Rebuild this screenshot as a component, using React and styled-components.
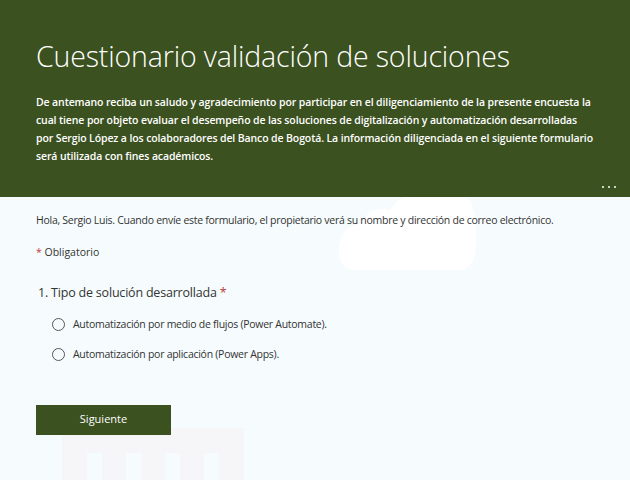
import React from "react";
import styled, { createGlobalStyle } from "styled-components";

const GlobalStyle = createGlobalStyle`
  html, body {
    margin: 0;
    padding: 0;
    background: #f6fcfd;
    font-family: "Open Sans", "Noto Sans", sans-serif;
  }
`;

const Page = styled.div`
  position: relative;
  width: 630px;
  height: 480px;
  overflow: hidden;
  background: #f6fcfd;
`;

const Backdrop = styled.svg`
  position: absolute;
  left: 0;
  top: 0;
  width: 630px;
  height: 480px;
  z-index: 0;
`;

const Header = styled.header`
  position: relative;
  z-index: 1;
  height: 197px;
  box-sizing: border-box;
  background: #3b5120;
  padding: 36px 36px 0;
  display: flex;
  flex-direction: column;
  color: #ffffff;
`;

const Title = styled.h1`
  margin: 0;
  font-size: 28.5px;
  font-weight: 300;
  line-height: 40px;
  letter-spacing: -0.15px;
`;

const Intro = styled.p`
  margin: 17px 0 0;
  font-size: 10.5px;
  font-weight: 600;
  line-height: 18px;
  letter-spacing: -0.12px;
  white-space: nowrap;
`;

const MoreDots = styled.div`
  margin-top: auto;
  align-self: flex-end;
  margin-right: -22px;
  margin-bottom: 9px;
  display: flex;
  gap: 4px;
`;

const Dot = styled.span`
  width: 2px;
  height: 2px;
  border-radius: 50%;
  background: #ffffff;
`;

const Body = styled.main`
  position: relative;
  z-index: 1;
  padding: 15px 36px 0;
  color: #333333;
`;

const Notice = styled.p`
  margin: 0;
  font-size: 10.5px;
  line-height: 16px;
  letter-spacing: -0.27px;
`;

const Required = styled.p`
  margin: 16px 0 0;
  font-size: 10.5px;
  line-height: 16px;
`;

const Star = styled.span`
  color: #c0393b;
`;

const Question = styled.fieldset`
  border: none;
  margin: 23px 0 0;
  padding: 0 0 0 2px;
`;

const QuestionTitle = styled.legend`
  padding: 0;
  font-size: 12.5px;
  line-height: 20px;
  letter-spacing: -0.2px;
`;

const Options = styled.div`
  display: flex;
  flex-direction: column;
  gap: 12px;
  margin-top: 12px;
  padding-left: 14px;
`;

const Option = styled.label`
  display: flex;
  align-items: center;
  gap: 8px;
  font-size: 10.5px;
  line-height: 18px;
  letter-spacing: -0.27px;
`;

const Radio = styled.span`
  width: 11px;
  height: 11px;
  border: 1px solid #555555;
  border-radius: 50%;
  background: transparent;
  flex: none;
`;

const NextButton = styled.button`
  margin-top: 42px;
  width: 135px;
  height: 30px;
  padding: 0 0 3px;
  border: none;
  background: #3b5120;
  color: #ffffff;
  font-family: inherit;
  font-size: 11px;
  font-weight: 500;
  cursor: pointer;
`;

const options = [
  "Automatización por medio de flujos (Power Automate).",
  "Automatización por aplicación (Power Apps).",
];

const App = () => {
  return (
    <Page>
      <GlobalStyle />
      <Backdrop viewBox="0 0 630 480">
        <path
          d="M355 270 Q339 270 339 250 Q339 226 362 224 Q368 205 390 210 Q400 190 430 197 L468 197 Q478 215 476 235 Q478 270 458 270 Z"
          fill="#ffffff"
        />
        <rect x="62" y="428" width="182" height="52" fill="#f6f5f8" />
        {[87, 126, 165, 204].map((x) => (
          <rect key={x} x={x} y="453" width="15" height="27" fill="#f6fbfd" />
        ))}
      </Backdrop>
      <Header>
        <Title>Cuestionario validación de soluciones</Title>
        <Intro>
          De antemano reciba un saludo y agradecimiento por participar en el diligenciamiento de la presente encuesta la
          <br />
          cual tiene por objeto evaluar el desempeño de las soluciones de digitalización y automatización desarrolladas
          <br />
          por Sergio López a los colaboradores del Banco de Bogotá. La información diligenciada en el siguiente formulario
          <br />
          será utilizada con fines académicos.
        </Intro>
        <MoreDots>
          <Dot />
          <Dot />
          <Dot />
        </MoreDots>
      </Header>
      <Body>
        <Notice>
          Hola, Sergio Luis. Cuando envíe este formulario, el propietario verá su nombre y dirección de correo electrónico.
        </Notice>
        <Required>
          <Star>*</Star> Obligatorio
        </Required>
        <Question>
          <QuestionTitle>
            1. Tipo de solución desarrollada <Star>*</Star>
          </QuestionTitle>
          <Options>
            {options.map((label) => (
              <Option key={label}>
                <Radio />
                {label}
              </Option>
            ))}
          </Options>
        </Question>
        <NextButton>Siguiente</NextButton>
      </Body>
    </Page>
  );
};

export default App;
